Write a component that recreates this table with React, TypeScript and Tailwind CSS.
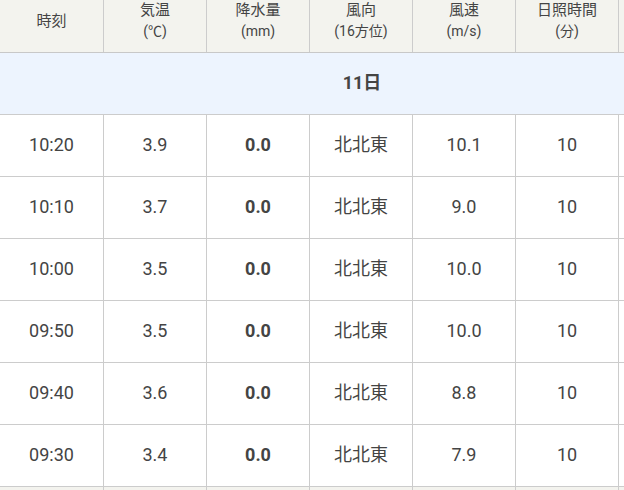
const rows = [
  { time: '10:20', temp: '3.9', rain: '0.0', dir: '北北東', speed: '10.1', sun: '10' },
  { time: '10:10', temp: '3.7', rain: '0.0', dir: '北北東', speed: '9.0', sun: '10' },
  { time: '10:00', temp: '3.5', rain: '0.0', dir: '北北東', speed: '10.0', sun: '10' },
  { time: '09:50', temp: '3.5', rain: '0.0', dir: '北北東', speed: '10.0', sun: '10' },
  { time: '09:40', temp: '3.6', rain: '0.0', dir: '北北東', speed: '8.8', sun: '10' },
  { time: '09:30', temp: '3.4', rain: '0.0', dir: '北北東', speed: '7.9', sun: '10' },
];

const heads = [
  { top: '時刻' },
  { top: '気温', sub: '(℃)' },
  { top: '降水量', sub: '(mm)' },
  { top: '風向', sub: '(16方位)' },
  { top: '風速', sub: '(m/s)' },
  { top: '日照時間', sub: '(分)' },
  { top: '' },
];

const font = { fontFamily: 'Roboto, "Noto Sans CJK JP", sans-serif' };

function Cell({ children, first, bold }: { children?: React.ReactNode; first?: boolean; bold?: boolean }) {
  return (
    <div
      className={`${first ? 'w-[104px]' : 'w-[103px]'} shrink-0 h-full border-r border-[#cccccc] flex items-center justify-center pb-[3px] text-[18px] ${bold ? 'font-bold' : ''}`}
    >
      {children}
    </div>
  );
}

export default function App() {
  return (
    <div className="w-[624px] h-[490px] overflow-hidden bg-white text-[#444444]" style={font}>
      <div className="w-[724px]">
        <div className="flex h-[53px] bg-[#f3f3ee] border-b border-[#c8c8c8]">
          {heads.map((h, i) => (
            <div
              key={i}
              className={`${i === 0 ? 'w-[104px]' : 'w-[103px]'} shrink-0 h-full border-r border-[#cccccc]`}
            >
              <div className="h-[42px] flex flex-col items-center justify-center">
                <div className="text-[15px] leading-[21px]">{h.top}</div>
                {h.sub && <div className="text-[14px] leading-[21px]">{h.sub}</div>}
              </div>
            </div>
          ))}
        </div>
        <div className="h-[62px] bg-[#edf4fe] border-b border-[#cccccc] flex items-center justify-center pb-[3px] text-[18px] font-bold">
          11日
        </div>
        {rows.map((r) => (
          <div key={r.time} className="flex h-[62px] border-b border-[#cccccc]">
            <Cell first>{r.time}</Cell>
            <Cell>{r.temp}</Cell>
            <Cell bold>{r.rain}</Cell>
            <Cell>{r.dir}</Cell>
            <Cell>{r.speed}</Cell>
            <Cell>{r.sun}</Cell>
            <Cell />
          </div>
        ))}
        <div className="h-[20px] bg-[#f3f3ee] flex">
          {heads.map((_, i) => (
            <div
              key={i}
              className={`${i === 0 ? 'w-[104px]' : 'w-[103px]'} shrink-0 h-full border-r border-[#cccccc]`}
            />
          ))}
        </div>
      </div>
    </div>
  );
}
